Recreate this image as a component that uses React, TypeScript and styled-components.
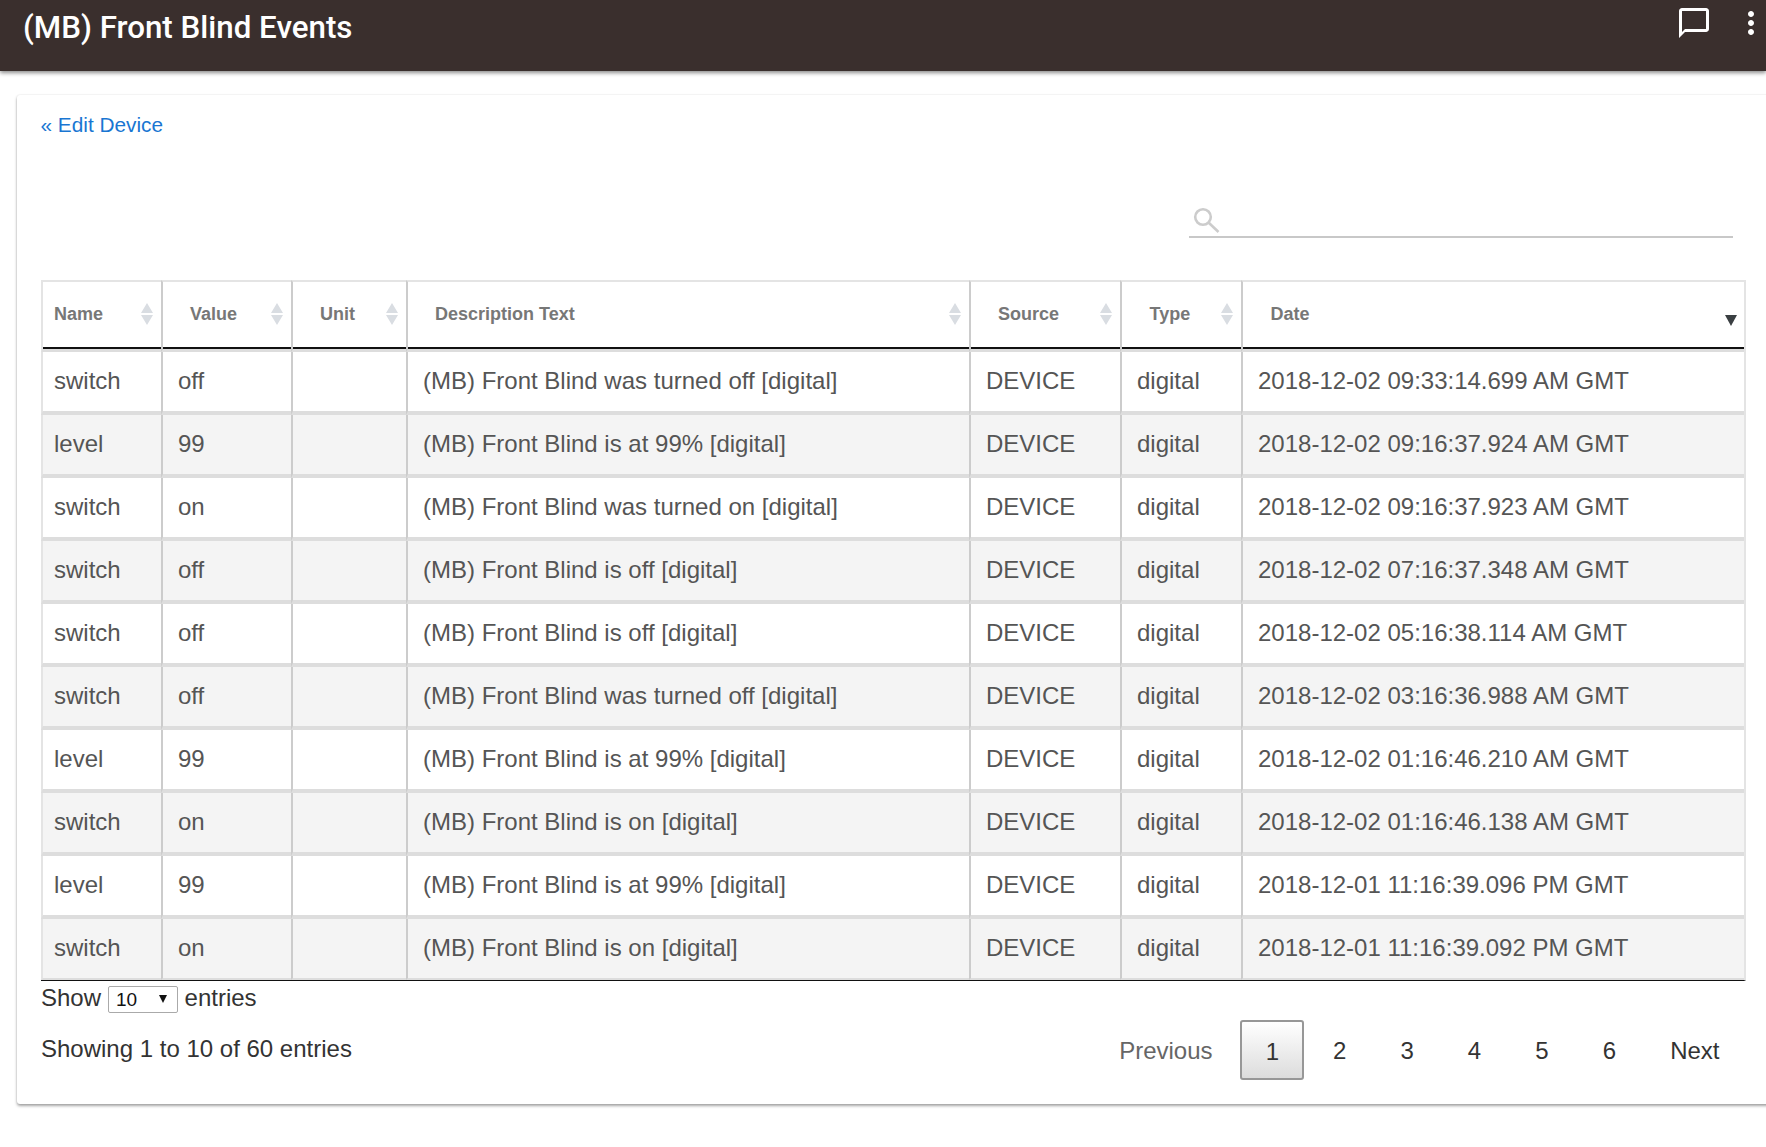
import React from 'react';
import styled, {createGlobalStyle} from 'styled-components';

const GlobalStyle = createGlobalStyle`
  html, body {
    margin: 0;
    padding: 0;
    background: #fff;
    overflow: hidden;
  }
  body {
    font-family: "Liberation Sans", Arial, sans-serif;
  }
`;

const Page = styled.div`
  position: relative;
  width: 1766px;
  height: 1147px;
  overflow: hidden;
  background: #fff;
`;

const TopBar = styled.header`
  position: relative;
  height: 71px;
  background: #3a2f2d;
  box-shadow: 0 2px 4px rgba(0, 0, 0, 0.45);
`;

const Title = styled.h1`
  position: absolute;
  left: 23px;
  top: 9px;
  margin: 0;
  font-family: Roboto, sans-serif;
  font-size: 31.3px;
  line-height: 38px;
  font-weight: 500;
  color: #fff;
`;

const BarIcon = styled.svg<{$left: number}>`
  position: absolute;
  left: ${(p) => p.$left}px;
  top: 5px;
  width: 36px;
  height: 36px;
  fill: #fff;
`;

const Card = styled.main`
  position: absolute;
  left: 17px;
  top: 95px;
  width: 1790px;
  height: 1009px;
  background: #fff;
  border-radius: 3px;
  box-shadow: 0 2px 3px rgba(0, 0, 0, 0.35), 0 0 2px rgba(0, 0, 0, 0.12);
`;

const BackLink = styled.a`
  position: absolute;
  left: 23.5px;
  top: 14px;
  font-size: 20.8px;
  line-height: 32px;
  color: #1976d2;
  text-decoration: none;
`;

const SearchBox = styled.div`
  position: absolute;
  left: 1172px;
  top: 104px;
  width: 544px;
  height: 37px;
  border-bottom: 2px solid #c8c8c8;
`;

const SearchIcon = styled.svg`
  position: absolute;
  left: 0;
  top: 0;
  width: 34px;
  height: 36px;
  fill: none;
  stroke: #ccc;
  stroke-width: 2.6;
`;

const Table = styled.table`
  position: absolute;
  left: 24px;
  top: 185px;
  width: 1703px;
  table-layout: fixed;
  border-collapse: separate;
  border-spacing: 0;
  border-bottom: 1px solid #111;
  border-right: 2px solid #e4e4e4;
`;

const HeadCell = styled.th<{$first?: boolean; $pad?: number}>`
  position: relative;
  height: 72px;
  padding: 0 0 3px ${(p) => p.$pad ?? (p.$first ? 11 : 27)}px;
  box-sizing: border-box;
  text-align: left;
  font-size: 18px;
  font-weight: 700;
  color: #777;
  border-top: 2px solid #e4e4e4;
  border-left: 2px solid ${(p) => (p.$first ? '#e4e4e4' : '#ccc')};
  border-bottom: 3px solid #ddd;
  &::after {
    content: '';
    position: absolute;
    left: 0;
    right: 0;
    bottom: 0;
    height: 2px;
    background: #111;
  }
`;

const SortArrows = styled.svg`
  position: absolute;
  right: 7px;
  top: 20px;
  width: 14px;
  height: 24px;
  fill: #d9dde2;
`;

const SortDown = styled.svg`
  position: absolute;
  right: 6px;
  top: 32px;
  width: 14px;
  height: 13px;
  fill: #3a3f42;
`;

const Row = styled.tr<{$alt: boolean}>`
  background: ${(p) => (p.$alt ? '#f4f4f4' : '#fff')};
  &:last-child td {
    height: 61px;
    padding-bottom: 1px;
    border-bottom-width: 2px;
  }
`;

const Cell = styled.td<{$first?: boolean}>`
  height: 63px;
  padding: 0 0 2px ${(p) => (p.$first ? 11 : 15)}px;
  box-sizing: border-box;
  font-size: 24px;
  color: #555;
  white-space: nowrap;
  border-left: 2px solid ${(p) => (p.$first ? '#e4e4e4' : '#ccc')};
  border-bottom: 4px solid #ddd;
`;

const ShowLine = styled.div`
  position: absolute;
  left: 24px;
  top: 886px;
  display: flex;
  align-items: center;
  height: 34px;
  font-size: 24px;
  color: #333;
`;

const FakeSelect = styled.div`
  position: relative;
  width: 70px;
  height: 27px;
  margin: 3px 6.5px 0 7px;
  padding-left: 7px;
  box-sizing: border-box;
  border: 1px solid #aaa;
  border-radius: 2px;
  font-size: 19px;
  line-height: 26px;
  color: #111;
  &::after {
    content: '';
    position: absolute;
    right: 10px;
    top: 8px;
    border-left: 4.5px solid transparent;
    border-right: 4.5px solid transparent;
    border-top: 8px solid #111;
  }
`;

const Info = styled.div`
  position: absolute;
  left: 24px;
  top: 937px;
  font-size: 24px;
  line-height: 34px;
  color: #333;
`;

const Pager = styled.nav`
  position: absolute;
  left: 1076px;
  top: 925px;
  height: 60px;
  display: flex;
  align-items: center;
`;

const PageLink = styled.a<{$muted?: boolean; $w: number}>`
  display: block;
  width: ${(p) => p.$w}px;
  height: 34px;
  margin-top: 2px;
  text-align: center;
  font-size: 24px;
  line-height: 34px;
  color: ${(p) => (p.$muted ? '#666' : '#333')};
`;

const ActivePage = styled.a`
  display: block;
  width: 64px;
  height: 60px;
  margin: 0 1.7px;
  box-sizing: border-box;
  text-align: center;
  font-size: 24px;
  line-height: 60px;
  color: #333;
  background: linear-gradient(to bottom, #fff 0%, #dcdcdc 100%);
  border: 2px solid #979797;
  border-radius: 3px;
`;

const columns = [120, 130, 115, 563, 151, 121, 503];
const headings = ['Name', 'Value', 'Unit', 'Description Text', 'Source', 'Type'];

const rows = [
  ['switch', 'off', '(MB) Front Blind was turned off [digital]', '2018-12-02 09:33:14.699 AM GMT'],
  ['level', '99', '(MB) Front Blind is at 99% [digital]', '2018-12-02 09:16:37.924 AM GMT'],
  ['switch', 'on', '(MB) Front Blind was turned on [digital]', '2018-12-02 09:16:37.923 AM GMT'],
  ['switch', 'off', '(MB) Front Blind is off [digital]', '2018-12-02 07:16:37.348 AM GMT'],
  ['switch', 'off', '(MB) Front Blind is off [digital]', '2018-12-02 05:16:38.114 AM GMT'],
  ['switch', 'off', '(MB) Front Blind was turned off [digital]', '2018-12-02 03:16:36.988 AM GMT'],
  ['level', '99', '(MB) Front Blind is at 99% [digital]', '2018-12-02 01:16:46.210 AM GMT'],
  ['switch', 'on', '(MB) Front Blind is on [digital]', '2018-12-02 01:16:46.138 AM GMT'],
  ['level', '99', '(MB) Front Blind is at 99% [digital]', '2018-12-01 11:16:39.096 PM GMT'],
  ['switch', 'on', '(MB) Front Blind is on [digital]', '2018-12-01 11:16:39.092 PM GMT'],
];

const App = () => (
  <Page>
    <GlobalStyle />
    <TopBar>
      <Title>(MB) Front Blind Events</Title>
      <BarIcon $left={1676} viewBox="0 0 24 24">
        <path d="M20 2H4c-1.1 0-2 .9-2 2v18l4-4h14c1.1 0 2-.9 2-2V4c0-1.1-.9-2-2-2zm0 14H6l-2 2V4h16v12z" />
      </BarIcon>
      <BarIcon $left={1733} viewBox="0 0 24 24">
        <path d="M12 8c1.1 0 2-.9 2-2s-.9-2-2-2-2 .9-2 2 .9 2 2 2zm0 2c-1.1 0-2 .9-2 2s.9 2 2 2 2-.9 2-2-.9-2-2-2zm0 6c-1.1 0-2 .9-2 2s.9 2 2 2 2-.9 2-2-.9-2-2-2z" />
      </BarIcon>
    </TopBar>
    <Card>
      <BackLink href="#">« Edit Device</BackLink>
      <SearchBox>
        <SearchIcon viewBox="0 0 34 36">
          <circle cx="14" cy="18" r="7.8" />
          <path d="M19.5 23.5L29.5 33" />
        </SearchIcon>
      </SearchBox>
      <Table>
        <colgroup>
          {columns.map((w, i) => (
            <col key={i} width={w} />
          ))}
        </colgroup>
        <thead>
          <tr>
            {headings.map((h, i) => (
              <HeadCell key={h} $first={i === 0} $pad={h === 'Type' ? 27.5 : undefined}>
                {h}
                <SortArrows viewBox="0 0 14 24">
                  <path d="M7 1l6 10H1zM7 23L1 13h12z" />
                </SortArrows>
              </HeadCell>
            ))}
            <HeadCell $pad={27.5}>
              Date
              <SortDown viewBox="0 0 14 13">
                <path d="M1 1h12L7 12z" />
              </SortDown>
            </HeadCell>
          </tr>
        </thead>
        <tbody>
          {rows.map((r, i) => (
            <Row key={i} $alt={i % 2 === 1}>
              <Cell $first>{r[0]}</Cell>
              <Cell>{r[1]}</Cell>
              <Cell />
              <Cell>{r[2]}</Cell>
              <Cell>DEVICE</Cell>
              <Cell>digital</Cell>
              <Cell>{r[3]}</Cell>
            </Row>
          ))}
        </tbody>
      </Table>
      <ShowLine>
        Show
        <FakeSelect>10</FakeSelect>
        entries
      </ShowLine>
      <Info>Showing 1 to 10 of 60 entries</Info>
      <Pager>
        <PageLink $w={145.7} $muted>
          Previous
        </PageLink>
        <ActivePage>1</ActivePage>
        {['2', '3', '4', '5', '6'].map((p) => (
          <PageLink key={p} $w={67.4}>
            {p}
          </PageLink>
        ))}
        <PageLink $w={103.6}>Next</PageLink>
      </Pager>
    </Card>
  </Page>
);

export default App;
